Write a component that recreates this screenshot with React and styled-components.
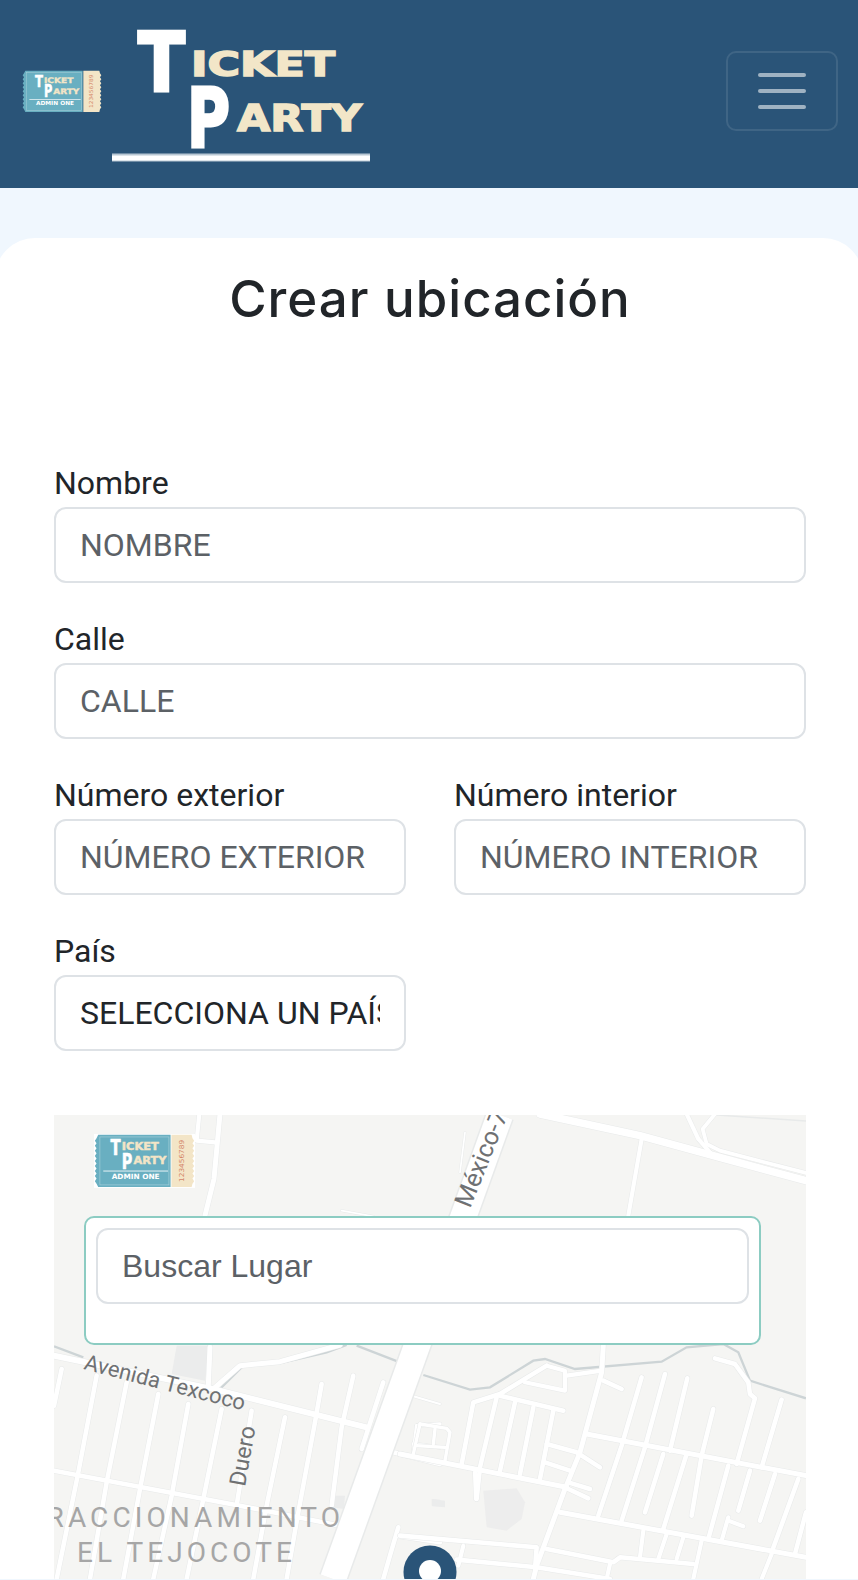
import React from "react";
import styled, { createGlobalStyle } from "styled-components";

const NAVY = "#2a5478";

const GlobalStyle = createGlobalStyle`
    html, body {
        margin: 0;
        padding: 0;
        background: #f0f7fe;
    }
    * {
        box-sizing: border-box;
    }
`;

// scalloped edge for the ticket: returns the points going down one side
function teeth(x, dir, top, bottom, count) {
    const step = (bottom - top) / count;
    const pts = [];
    for (let i = 0; i < count; i++) {
        pts.push(`${x},${top + i * step}`);
        pts.push(`${x + dir * 4},${top + (i + 0.5) * step}`);
    }
    pts.push(`${x},${bottom}`);
    return pts;
}

function TicketLogo({ width, backing }) {
    const body = [
        "10,2",
        "182,2",
        "182,126",
        "10,126",
        ...teeth(6, -1, 118, 10, 9),
    ].join(" ");
    const stub = [
        "184,2",
        "232,2",
        ...teeth(234, 1, 10, 118, 9),
        "232,126",
        "184,126",
    ].join(" ");
    return (
        <TicketSvg width={width} viewBox="0 0 240 128">
            {backing && <rect width="240" height="128" fill="#ffffff" />}
            <polygon points={body} fill="#69afc1" />
            <polygon points={stub} fill="#f3e5c7" />
            <rect x="14" y="7" width="164" height="114" fill="none" stroke="#a9d0da" strokeWidth="1.5" />
            <LogoText x="39" y="50" fontSize="50" fill="#ffffff" stroke="#ffffff" strokeWidth="1.5" textLength="24" lengthAdjust="spacingAndGlyphs">T</LogoText>
            <LogoText x="66" y="39" fontSize="23" fill="#f3e5c7" stroke="#f3e5c7" strokeWidth="1" textLength="88" lengthAdjust="spacingAndGlyphs">ICKET</LogoText>
            <LogoText x="66" y="82" fontSize="52" fill="#ffffff" stroke="#ffffff" strokeWidth="1.5" textLength="25" lengthAdjust="spacingAndGlyphs">P</LogoText>
            <LogoText x="94" y="72" fontSize="23" fill="#f3e5c7" stroke="#f3e5c7" strokeWidth="1" textLength="78" lengthAdjust="spacingAndGlyphs">ARTY</LogoText>
            <rect x="22" y="87" width="154" height="2" fill="#ffffff" />
            <LogoText x="42" y="106" fontSize="17" fill="#ffffff" textLength="114" lengthAdjust="spacingAndGlyphs">ADMIN ONE</LogoText>
            <StubText x="0" y="0" fontSize="16" fill="#d4856a" textLength="100" lengthAdjust="spacingAndGlyphs" transform="translate(214 114) rotate(-90)">123456789</StubText>
        </TicketSvg>
    );
}

function WordLogo() {
    return (
        <WordSvg width="258" height="134" viewBox="112 29 258 134">
            <LogoText x="138" y="91" fontSize="82" fill="#ffffff" stroke="#ffffff" strokeWidth="3" textLength="47" lengthAdjust="spacingAndGlyphs">T</LogoText>
            <LogoText x="191" y="76" fontSize="33" fill="#f2e6c8" stroke="#f2e6c8" strokeWidth="1.5" textLength="144" lengthAdjust="spacingAndGlyphs">ICKET</LogoText>
            <LogoText x="187" y="147" fontSize="82" fill="#ffffff" stroke="#ffffff" strokeWidth="3" textLength="43" lengthAdjust="spacingAndGlyphs">P</LogoText>
            <LogoText x="237" y="131" fontSize="37" fill="#f2e6c8" stroke="#f2e6c8" strokeWidth="1.5" textLength="125" lengthAdjust="spacingAndGlyphs">ARTY</LogoText>
            <rect x="112" y="153.5" width="258" height="8" fill="#b9c8d4" />
            <rect x="112" y="155.5" width="258" height="5" fill="#ffffff" />
        </WordSvg>
    );
}

// road polylines, written in the coordinates of the crop they were read from (3x)
const ROADS_TOP = [
    ["300,45 600,110 820,170 1098,245", 18],
    ["605,120 565,350", 10],
    ["740,45 775,120 810,160", 10],
    ["825,45 788,90 800,135 840,155 1098,222", 9],
    ["75,100 60,220", 4],
];

const ROADS_TICKET = [
    ["540,45 522,240 495,350", 12],
    ["478,45 470,125 525,130", 10],
    ["905,335 1000,352", 4],
];

const ROADS_LEFT = [
    ["42,50 520,150 980,265", 14],
    ["65,90 42,200", 11],
    ["170,110 115,400 50,720", 11],
    ["260,130 200,430 150,720", 11],
    ["355,165 300,450 250,720", 11],
    ["445,195 395,470 340,720", 11],
    ["545,210 490,480 440,720", 11],
    ["635,215 590,500", 11],
    ["735,235 680,500 640,720", 11],
    ["825,250 775,520 740,720", 11],
    ["845,135 825,250", 11],
    ["940,110 905,265 875,500", 11],
    ["1030,130 965,330", 11],
    ["42,395 600,500 900,560", 11],
    ["510,25 505,140", 12],
    ["520,150 600,80 720,68 900,18", 12],
    ["1060,340 1200,375", 11],
    ["1075,565 1050,650 1030,720", 11],
    ["1070,590 1200,610", 11],
    ["1130,260 1120,340", 8],
    ["1130,260 1200,255", 8],
    ["1120,315 1200,325", 8],
    ["1115,170 1200,195", 5],
];

const ROADS_RIGHT = [
    ["0,345 500,445", 12],
    ["440,80 300,165 220,190 185,375", 11],
    ["290,175 240,385 230,480", 11],
    ["300,170 490,215", 11],
    ["345,190 300,395", 11],
    ["400,205 360,405", 11],
    ["460,215 420,420", 11],
    ["375,130 495,155 495,95 440,80", 10],
    ["500,110 605,95", 10],
    ["610,20 605,100 540,340 495,450 410,680 400,720", 12],
    ["610,125 665,150", 11],
    ["560,285 1218,410", 12],
    ["725,115 665,320 595,530", 11],
    ["795,105 735,325 665,545", 11],
    ["862,118 810,335", 11],
    ["790,345 735,520", 11],
    ["860,345 790,570", 11],
    ["940,210 905,350 875,530", 11],
    ["945,58 1005,75 1045,130 1050,165 1065,178 1010,375", 11],
    ["1145,182 1085,385", 11],
    ["985,380 925,600", 11],
    ["1050,395 1015,515", 11],
    ["1125,405 1080,545", 11],
    ["1195,420 1115,640", 11],
    ["1218,520 1185,645", 11],
    ["440,315 530,340 600,385", 11],
    ["435,370 510,395", 11],
    ["505,430 570,450", 11],
    ["505,450 565,478", 11],
    ["480,520 1218,655", 12],
    ["985,535 965,605", 10],
    ["985,545 1030,562", 10],
    ["730,575 720,655", 10],
    ["800,585 775,660", 10],
    ["850,595 830,660", 10],
    ["905,605 880,720", 10],
    ["0,590 410,625 405,690", 11],
    ["190,620 175,680", 10],
    ["170,662 410,685", 11],
    ["410,685 630,720", 11],
    ["440,630 640,670 660,655 880,675", 11],
    ["630,675 620,720", 10],
    ["1115,645 1085,720", 10],
    ["60,255 40,345", 8],
    ["60,255 140,268 150,280 135,365", 8],
    ["50,320 135,325", 8],
    ["105,270 100,315", 8],
    ["225,400 228,480", 10],
];

function Roads({ origin, items }) {
    return (
        <g transform={`translate(${origin}) scale(0.3333)`} fill="none" strokeLinecap="round" strokeLinejoin="round">
            {items.map(([points, w]) => (
                <polyline key={points + "c"} points={points} stroke="#e8eaea" strokeWidth={w * 1.25 + 3} />
            ))}
            {items.map(([points, w]) => (
                <polyline key={points} points={points} stroke="#ffffff" strokeWidth={w * 1.25} />
            ))}
        </g>
    );
}

function MapDrawing() {
    return (
        <MapSvg width="752" height="464" viewBox="54 1116 752 464">
            <rect x="54" y="1116" width="752" height="464" fill="#f5f5f3" />

            <g transform="translate(40 1340) scale(0.3333)">
                <polygon points="410,20 510,20 495,125 395,105" fill="#ebecec" />
                <polygon points="880,470 915,470 912,510 875,505" fill="#ebecec" />
                <polygon points="1175,480 1200,482 1200,502 1175,500" fill="#ebecec" />
            </g>
            <g transform="translate(400 1340) scale(0.3333)">
                <polygon points="250,455 350,448 375,490 365,540 320,575 260,565" fill="#ededed" />
                <polygon points="97,480 135,485 135,505 97,502" fill="#ebecec" />
            </g>

            <g transform="translate(400 1340) scale(0.3333)" fill="none" stroke="#cdd4d6" strokeWidth="7">
                <polyline points="70,108 210,152 270,145 400,65 435,60 525,90 785,68 860,25 970,15 1015,40 1050,125 1135,152 1218,178" />
            </g>
            <g transform="translate(40 1340) scale(0.3333)" fill="none" stroke="#cdd4d6" strokeWidth="7">
                <polyline points="540,150 610,80 720,72 860,40 920,18" />
                <polyline points="950,20 1080,70" />
                <polyline points="42,22 130,55" />
            </g>

            <polyline points="717,1116 806,1122" fill="none" stroke="#e8eaea" strokeWidth="1.5" />
            <Roads origin="440 1100" items={ROADS_TOP} />
            <Roads origin="40 1100" items={ROADS_TICKET} />
            <Roads origin="40 1340" items={ROADS_LEFT} />
            <Roads origin="400 1340" items={ROADS_RIGHT} />

            <line x1="500" y1="1116" x2="333" y2="1580" stroke="#e8eaea" strokeWidth="29" />
            <line x1="500" y1="1116" x2="333" y2="1580" stroke="#ffffff" strokeWidth="26" />

            <MapLabel transform="translate(83 1370) rotate(14.5)" fontSize="22">Avenida Texcoco</MapLabel>
            <MapLabel transform="translate(245 1488) rotate(-80)" fontSize="23">Duero</MapLabel>
            <MapLabel transform="translate(470 1210) rotate(-68)" fontSize="25">México-7</MapLabel>
            <DistrictLabel x="27" y="1528" textLength="313" fontSize="28">FRACCIONAMIENTO</DistrictLabel>
            <DistrictLabel x="77" y="1563" textLength="215" fontSize="28">EL TEJOCOTE</DistrictLabel>

            <circle cx="430" cy="1573" r="26.5" fill={NAVY} />
            <circle cx="430" cy="1572" r="11" fill="#ffffff" />
        </MapSvg>
    );
}

export default function App() {
    return (
        <Page>
            <GlobalStyle />
            <NavBar>
                <NavTicket>
                    <TicketLogo width={80} />
                </NavTicket>
                <WordLogo />
                <MenuToggle aria-label="menu">
                    <svg width="48" height="36" viewBox="0 0 48 36">
                        <g stroke="rgba(255,255,255,0.55)" strokeWidth="4" strokeLinecap="round">
                            <line x1="2" y1="2" x2="46" y2="2" />
                            <line x1="2" y1="18" x2="46" y2="18" />
                            <line x1="2" y1="34" x2="46" y2="34" />
                        </g>
                    </svg>
                </MenuToggle>
            </NavBar>
            <Card>
                <Title>Crear ubicación</Title>
                <FormGrid>
                    <Field $wide>
                        <FieldLabel>Nombre</FieldLabel>
                        <TextInput placeholder="NOMBRE" />
                    </Field>
                    <Field $wide>
                        <FieldLabel>Calle</FieldLabel>
                        <TextInput placeholder="CALLE" />
                    </Field>
                    <Field>
                        <FieldLabel>Número exterior</FieldLabel>
                        <TextInput placeholder="NÚMERO EXTERIOR" />
                    </Field>
                    <Field>
                        <FieldLabel>Número interior</FieldLabel>
                        <TextInput placeholder="NÚMERO INTERIOR" />
                    </Field>
                    <Field>
                        <FieldLabel>País</FieldLabel>
                        <CountrySelect defaultValue="">
                            <option value="">SELECCIONA UN PAÍS</option>
                        </CountrySelect>
                    </Field>
                </FormGrid>
                <MapBox>
                    <MapDrawing />
                    <MapTicket>
                        <TicketLogo width={101} backing />
                    </MapTicket>
                    <SearchPanel>
                        <SearchInput placeholder="Buscar Lugar" />
                    </SearchPanel>
                </MapBox>
            </Card>
        </Page>
    );
}

const Page = styled.div`
    width: 858px;
    height: 1580px;
    overflow: hidden;
    background: #f0f7fe;
`;

const NavBar = styled.nav`
    height: 188px;
    background: ${NAVY};
    display: flex;
    align-items: center;
    padding: 0 20px 0 22px;
    gap: 10px;
`;

const NavTicket = styled.div`
    flex: none;
    margin-top: -6px;
`;

const TicketSvg = styled.svg`
    display: block;
    flex: none;
`;

const WordSvg = styled.svg`
    display: block;
    flex: none;
    margin-top: 4px;
`;

const MapSvg = styled.svg`
    display: block;
`;

const LogoText = styled.text`
    font-family: "DejaVu Sans", sans-serif;
    font-weight: 700;
`;

const StubText = styled.text`
    font-family: "DejaVu Sans", sans-serif;
`;

const MapLabel = styled.text`
    font-family: Roboto, sans-serif;
    fill: #6f7173;
`;

const DistrictLabel = styled.text`
    font-family: Roboto, sans-serif;
    fill: #a6a6a6;
`;

const MenuToggle = styled.button`
    margin-left: auto;
    width: 112px;
    height: 80px;
    margin-top: -7px;
    padding: 0;
    display: flex;
    align-items: center;
    justify-content: center;
    background: transparent;
    border: 2px solid rgba(255, 255, 255, 0.1);
    border-radius: 10px;
`;

const Card = styled.main`
    margin: 50px -5px 0;
    padding: 0 57px 0 59px;
    background: #ffffff;
    border-radius: 40px 40px 0 0;
`;

const Title = styled.h1`
    margin: 0;
    padding-top: 29px;
    font-family: Inter, sans-serif;
    font-size: 51px;
    line-height: 64px;
    letter-spacing: 1px;
    font-weight: 500;
    color: #212529;
    text-align: center;
`;

const FormGrid = styled.div`
    display: grid;
    grid-template-columns: 352px 352px;
    column-gap: 48px;
    row-gap: 0;
    margin-top: 136px;
`;

const Field = styled.label`
    display: flex;
    flex-direction: column;
    height: 156px;
    grid-column: ${(p) => (p.$wide ? "1 / -1" : "auto")};
`;

const FieldLabel = styled.span`
    font-family: Roboto, sans-serif;
    font-size: 32px;
    line-height: 32px;
    color: #212529;
    margin-bottom: 8px;
`;

const TextInput = styled.input`
    width: 100%;
    height: 76px;
    padding: 0 24px;
    background: #ffffff;
    border: 2px solid #dee2e6;
    border-radius: 12px;
    font-family: Roboto, sans-serif;
    font-size: 32px;
    color: #212529;
    outline: none;
    &::placeholder {
        color: #5c6166;
        opacity: 1;
    }
`;

const CountrySelect = styled.select`
    width: 100%;
    height: 76px;
    padding: 0 24px;
    appearance: none;
    background: #ffffff;
    border: 2px solid #dee2e6;
    border-radius: 12px;
    font-family: Roboto, sans-serif;
    font-size: 32px;
    color: #212529;
    outline: none;
`;

const MapBox = styled.section`
    position: relative;
    width: 752px;
    height: 464px;
    margin-top: 24px;
    overflow: hidden;
`;

const MapTicket = styled.div`
    position: absolute;
    left: 40px;
    top: 19px;
`;

const SearchPanel = styled.div`
    position: absolute;
    left: 30px;
    top: 101px;
    width: 677px;
    height: 129px;
    padding: 10px;
    background: #ffffff;
    border: 2px solid #8cccc2;
    border-radius: 10px;
`;

const SearchInput = styled(TextInput)`
    font-family: "Liberation Sans", sans-serif;
`;
